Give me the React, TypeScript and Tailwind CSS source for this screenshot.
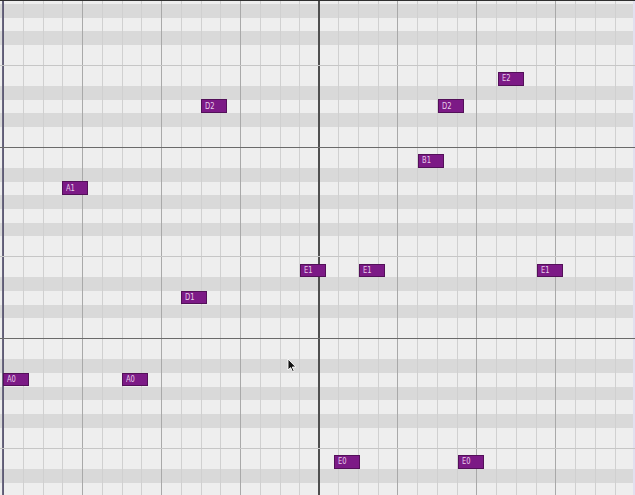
import React from "react";

const ROW_H = 13.68;
const COL_W = 19.78;

// one octave = 14 rows here; gray = black key, minor/major = centre line
const PATTERN: ("gray" | "light" | "minor" | "major")[] = [
  "gray", "light", "gray", "light", "minor", "light", "gray",
  "light", "gray", "light", "major", "light", "gray", "light",
];

const notes = [
  { name: "E2", col: 25, row: 5 },
  { name: "D2", col: 10, row: 7 },
  { name: "D2", col: 22, row: 7 },
  { name: "B1", col: 21, row: 11 },
  { name: "A1", col: 3, row: 13 },
  { name: "E1", col: 15, row: 19 },
  { name: "E1", col: 18, row: 19 },
  { name: "E1", col: 27, row: 19 },
  { name: "D1", col: 9, row: 21 },
  { name: "A0", col: 0, row: 27 },
  { name: "A0", col: 6, row: 27 },
  { name: "E0", col: 16.75, row: 33 },
  { name: "E0", col: 23, row: 33 },
];

function Row({ kind }: { kind: string }) {
  return (
    <div
      className={`h-[13.68px] shrink-0 flex items-center ${
        kind === "gray" ? "bg-[#d9d9d9]" : "bg-[#eeeeee]"
      }`}
    >
      {kind === "minor" && <div className="relative z-[1] h-px w-full bg-[#c6c6c6]" />}
      {kind === "major" && <div className="relative z-[1] h-px w-full bg-[#6a6a6a]" />}
    </div>
  );
}

function GridColumns() {
  return (
    <div className="absolute inset-0 flex pointer-events-none">
      <div className="w-[3px] shrink-0 border-r border-[#6a6780]" />
      {Array.from({ length: 33 }).map((_, k) => (
        <div
          key={k}
          className={`w-[19.78px] shrink-0 ${
            k === 0
              ? "border-l border-[#5e5b74]"
              : k % 16 === 0
              ? "border-l-2 border-[#4f4f4f] -ml-[1px]"
              : k % 4 === 0
              ? "border-l border-[#a9a9a9]"
              : "border-l border-[#d0d0d0]"
          }`}
        />
      ))}
    </div>
  );
}

function Note({ name, col, row }: { name: string; col: number; row: number }) {
  return (
    <div
      className="absolute z-[2] w-[26px] h-[13.5px] bg-[#7c1a86] border border-[#531059] flex items-center pl-[3px]"
      style={{ left: 3 + col * COL_W, top: 4 + row * ROW_H - 1.4 }}
    >
      <span className="inline-block origin-left scale-x-[0.75] text-[9px] leading-none text-[#e6cfea] font-['DejaVu_Sans',sans-serif]">
        {name}
      </span>
    </div>
  );
}

function Cursor() {
  return (
    <svg
      className="absolute z-[3] left-[287px] top-[357px]"
      width="10"
      height="15"
      viewBox="0 0 10 15"
    >
      <path
        d="M1 1 L1 12 L3.6 9.6 L5.6 13.8 L7.2 13.1 L5.3 9 L8.8 9 Z"
        fill="#111"
        stroke="#fff"
        strokeWidth="0.9"
        strokeLinejoin="round"
      />
    </svg>
  );
}

export default function App() {
  const rows = Array.from({ length: 36 }, (_, r) => PATTERN[r % 14]);

  return (
    <div className="relative w-[635px] h-[495px] overflow-hidden bg-[#eeeeee] border-t border-[#2f2f2f]">
      <div className="flex flex-col pt-[3px]">
        {rows.map((kind, r) => (
          <Row key={r} kind={kind} />
        ))}
      </div>

      <GridColumns />

      <div className="absolute top-0 right-0 bottom-0 w-[2px] bg-[#e2e0ef]" />

      {notes.map((n, i) => (
        <Note key={i} {...n} />
      ))}

      <Cursor />
    </div>
  );
}
